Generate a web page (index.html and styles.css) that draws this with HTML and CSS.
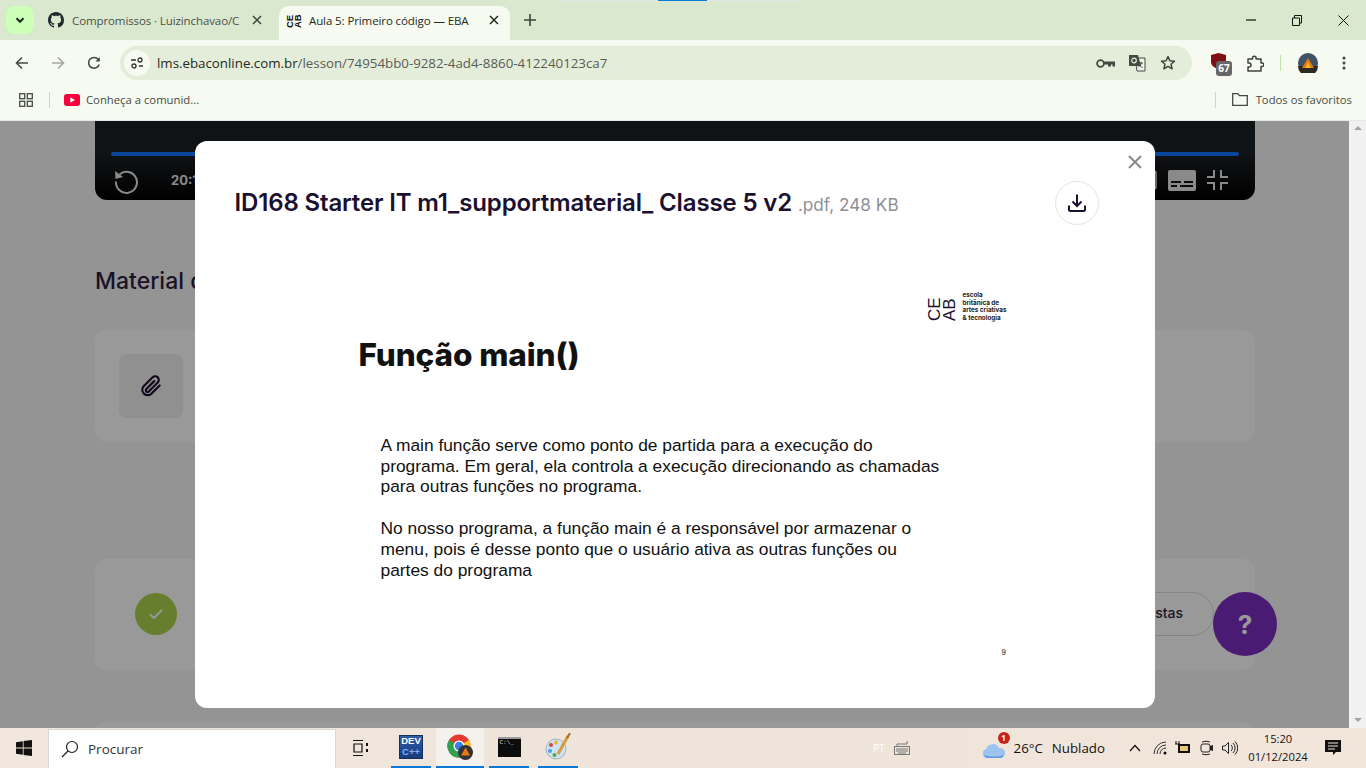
FILE: index.html

```html
<!DOCTYPE html>
<html lang="pt-BR">
<head>
  <meta charset="UTF-8" />
  <meta name="viewport" content="width=device-width, initial-scale=1.0"/>
  <title>Aula 5: Primeiro código — EBAC</title>
  <link rel="stylesheet" href="styles.css">
</head>
<body>

  <!-- browser chrome -->
  <header class="browser">
    <div class="share-strip"><span></span></div>
    <div class="tabstrip">
      <button class="tab-search">
        <svg width="12" height="12" viewBox="0 0 12 12"><path d="M2.5 4.2 6 7.8l3.5-3.6" fill="none" stroke="#1f2a1c" stroke-width="2"/></svg>
      </button>
      <div class="tab">
        <svg class="favicon" width="16" height="16" viewBox="0 0 16 16"><path fill="#24292f" d="M8 0C3.58 0 0 3.58 0 8c0 3.54 2.29 6.53 5.47 7.59.4.07.55-.17.55-.38 0-.19-.01-.82-.01-1.49-2.01.37-2.53-.49-2.69-.94-.09-.23-.48-.94-.82-1.13-.28-.15-.68-.52-.01-.53.63-.01 1.08.58 1.23.82.72 1.21 1.87.87 2.33.66.07-.52.28-.87.51-1.07-1.78-.2-3.64-.89-3.64-3.95 0-.87.31-1.59.82-2.15-.08-.2-.36-1.02.08-2.12 0 0 .67-.21 2.2.82.64-.18 1.32-.27 2-.27s1.36.09 2 .27c1.53-1.04 2.2-.82 2.2-.82.44 1.1.16 1.92.08 2.12.51.56.82 1.27.82 2.15 0 3.07-1.87 3.75-3.65 3.95.29.25.54.73.54 1.48 0 1.07-.01 1.93-.01 2.2 0 .21.15.46.55.38A8.01 8.01 0 0 0 16 8c0-4.42-3.58-8-8-8z"/></svg>
        <span class="tab-title">Compromissos · Luizinchavao/C</span>
        <svg class="tab-close" width="10" height="10" viewBox="0 0 10 10"><path d="M1 1l8 8M9 1l-8 8" stroke="#3c4438" stroke-width="1.5"/></svg>
      </div>
      <div class="tab tab-active">
        <div class="ebac-mark ebac-mark-small"><span>CE</span><span>AB</span></div>
        <span class="tab-title">Aula 5: Primeiro código — EBA</span>
        <svg class="tab-close" width="10" height="10" viewBox="0 0 10 10"><path d="M1 1l8 8M9 1l-8 8" stroke="#1f2a1c" stroke-width="1.5"/></svg>
      </div>
      <svg class="new-tab" width="12" height="12" viewBox="0 0 12 12"><path d="M6 0v12M0 6h12" stroke="#3c4438" stroke-width="1.6"/></svg>
      <div class="window-btns">
        <svg width="10" height="10" viewBox="0 0 10 10"><path d="M0 5h10" stroke="#111" stroke-width="1.2"/></svg>
        <svg width="10" height="11" viewBox="0 0 10 11"><path d="M.5 3h7v7.500h-7zM2.500 3V.5h7v7.500H7.500" fill="none" stroke="#111"/></svg>
        <svg width="11" height="11" viewBox="0 0 11 11"><path d="M.5.5l10 10M10.500.5l-10 10" stroke="#111"/></svg>
      </div>
    </div>

    <div class="toolbar">
      <svg class="nav-icon" width="14" height="14" viewBox="0 0 14 14"><path d="M13 7H2M7 1.500 1.500 7 7 12.500" fill="none" stroke="#454b43" stroke-width="1.6"/></svg>
      <svg class="nav-icon" width="14" height="14" viewBox="0 0 14 14"><path d="M1 7h11M7 1.500 12.500 7 7 12.500" fill="none" stroke="#a3a8a0" stroke-width="1.6"/></svg>
      <svg class="nav-icon" width="14" height="14" viewBox="0 0 14 14"><path d="M12.200 8.500A5.400 5.400 0 1 1 11.300 3.500" fill="none" stroke="#454b43" stroke-width="1.6"/><path d="M12.800 1v4.400H8.400z" fill="#454b43"/></svg>
      <div class="omnibox">
        <span class="site-info">
          <svg width="14" height="14" viewBox="0 0 14 14"><g fill="none" stroke="#2d332b" stroke-width="1.300"><path d="M1 4h5M9 10h4"/><circle cx="10" cy="4" r="2"/><circle cx="4" cy="10" r="2"/></g></svg>
        </span>
        <span class="url"><b>lms.ebaconline.com.br</b>/lesson/74954bb0-9282-4ad4-8860-412240123ca7</span>
        <div class="omni-icons">
          <svg width="19" height="11" viewBox="0 0 19 11"><circle cx="4.500" cy="5.500" r="3.400" fill="none" stroke="#454b43" stroke-width="1.800"/><path d="M8 3.500h11v5h-2.500v-2H15v2h-3v-2H8z" fill="#454b43"/></svg>
          <svg width="18" height="18" viewBox="0 0 18 18"><path d="M7 4h10v13H9z" fill="#eef3e8" stroke="#454b43"/><path d="M1 1h9l3 11H1z" fill="#454b43"/><circle cx="6" cy="6.500" r="2.300" fill="none" stroke="#e4edda" stroke-width="1.200"/><path d="M11 9h4M13 8v1c0 2-1 3-2.500 4M11.500 10.500c.5 1.500 1.500 2.500 3 3" fill="none" stroke="#454b43"/></svg>
          <svg width="16" height="16" viewBox="0 0 16 16"><path d="M8 1.500l1.900 4.300 4.600.4-3.500 3 1.100 4.600L8 11.400l-4.100 2.400L5 9.200l-3.500-3 4.600-.4z" fill="none" stroke="#3d433b" stroke-width="1.500" stroke-linejoin="round"/></svg>
        </div>
      </div>
      <div class="ext-icons">
        <div class="ublock">
          <svg width="15" height="16" viewBox="0 0 15 16"><path d="M7.500 0 15 2v7c0 3.500-3.500 6-7.500 7C3.500 15 0 12.500 0 9V2z" fill="#7f0f12"/></svg>
          <span class="ublock-count">67</span>
        </div>
        <svg class="puzzle" width="17" height="17" viewBox="0 0 17 17"><path d="M1 4h4.500V3a1.800 1.800 0 0 1 3.600 0v1H14v4h1a1.800 1.800 0 0 1 0 3.600h-1V16H1v-4h1a2 2 0 0 0 0-4H1z" fill="none" stroke="#3d433b" stroke-width="1.500" stroke-linejoin="round"/></svg>
        <i class="bar-sep"></i>
        <svg class="avatar" width="20" height="20" viewBox="0 0 20 20"><circle cx="10" cy="10" r="10" fill="#3f5266"/><path d="M0 13h20a10 10 0 0 1-20 0z" fill="#2d2a1f"/><path d="M10 5l6 10H4z" fill="#e8780f"/><path d="M10 9l2.500 6h-5z" fill="#fbbf2e"/></svg>
        <svg class="menu-dots" width="4" height="14" viewBox="0 0 4 14"><circle cx="2" cy="2" r="1.500" fill="#3d433b"/><circle cx="2" cy="7" r="1.500" fill="#3d433b"/><circle cx="2" cy="12" r="1.500" fill="#3d433b"/></svg>
      </div>
    </div>

    <div class="bookmarks">
      <svg width="14" height="14" viewBox="0 0 14 14"><g fill="none" stroke="#454b43" stroke-width="1.300"><rect x=".7" y=".7" width="5" height="5"/><rect x="8.300" y=".7" width="5" height="5"/><rect x=".7" y="8.300" width="5" height="5"/><rect x="8.300" y="8.300" width="5" height="5"/></g></svg>
      <i class="bar-sep"></i>
      <svg width="16" height="12" viewBox="0 0 16 12"><rect width="16" height="12" rx="3" fill="#f8003c"/><path d="M6.300 3.300 11 6 6.300 8.700z" fill="#fff"/></svg>
      <span class="bookmark-label">Conheça a comunid...</span>
      <i class="bar-sep bar-sep-right"></i>
      <svg width="16" height="13" viewBox="0 0 16 13"><path d="M.7.7h5l1.800 2h7.800v9.600H.7z" fill="none" stroke="#454b43" stroke-width="1.300"/></svg>
      <span class="bookmark-label">Todos os favoritos</span>
    </div>
  </header>

  <!-- lesson page behind the dialog -->
  <div class="viewport">
    <main class="lesson">
      <section class="player">
        <div class="progress"></div>
        <div class="controls">
          <svg width="28" height="28" viewBox="0 0 28 28"><path d="M7.500 8.500A10.500 10.500 0 1 1 4 15.500" fill="none" stroke="#e6e6e6" stroke-width="2"/><path d="M3 5l.5 8 7.500-2z" fill="#e6e6e6"/></svg>
          <span class="time">20:14</span>
          <svg class="ctl-frame" width="14" height="20" viewBox="0 0 14 20"><rect x="1" y="1" width="12" height="18" rx="2" fill="none" stroke="#e6e6e6" stroke-width="1.500"/></svg>
          <svg width="28" height="21" viewBox="0 0 28 21"><rect width="28" height="21" rx="2" fill="#e6e6e6"/><path d="M3 12h10M16 12h9M3 16h6M12 16h13" stroke="#111" stroke-width="2"/></svg>
          <svg width="21" height="20" viewBox="0 0 21 20"><path d="M7 0v7H0M14 0v7h7M0 13h7v7M21 13h-7v7" fill="none" stroke="#e6e6e6" stroke-width="2"/></svg>
        </div>
      </section>

      <h2 class="section-title">Material de apoio</h2>

      <section class="card card-material">
        <div class="clip-tile">
          <svg width="26" height="26" viewBox="0 0 24 24"><path d="M20 11.500 12 19.500a5 5 0 0 1-7-7l8.500-8.500a3.300 3.300 0 0 1 4.700 4.700L10 17a1.600 1.600 0 0 1-2.300-2.300L15 7.500" fill="none" stroke="#1c1030" stroke-width="2" stroke-linecap="round"/></svg>
        </div>
      </section>

      <section class="card card-quiz">
        <span class="check">
          <svg width="16" height="12" viewBox="0 0 16 12"><path d="M2 6.500 6 10l8-8" fill="none" stroke="#fff" stroke-width="2"/></svg>
        </span>
        <a class="answers-btn">Ver respostas</a>
      </section>

      <section class="card card-next"></section>
    </main>

    <div class="scrollbar">
      <span class="arrow-up"></span>
      <span class="arrow-down"></span>
    </div>

    <button class="help-btn">?</button>

    <div class="overlay">
      <div class="modal">
        <svg class="modal-close" width="14" height="14" viewBox="0 0 14 14"><path d="M1 1l12 12M13 1 1 13" stroke="#8a8a8a" stroke-width="2"/></svg>
        <div class="modal-head">
          <h3 class="file-name">ID168 Starter IT m1_supportmaterial_ Classe 5 v2 <small>.pdf, 248 KB</small></h3>
          <button class="download">
            <svg width="20" height="20" viewBox="0 0 20 20"><path d="M10 1.500v11M5.500 8.500l4.500 4.500 4.500-4.500M2 12.500v4a1.500 1.500 0 0 0 1.500 1.500h13a1.500 1.500 0 0 0 1.500-1.500v-4" fill="none" stroke="#1c1030" stroke-width="2"/></svg>
          </button>
        </div>

        <div class="slide">
          <div class="slide-logo">
            <div class="ebac-mark"><span>CE</span><span>AB</span></div>
            <p>escola<br>britânica de<br>artes criativas<br>&amp; tecnologia</p>
          </div>
          <h1 class="slide-title">Função main()</h1>
          <p class="slide-text">A main função serve como ponto de partida para a execução do<br>programa. Em geral, ela controla a execução direcionando as chamadas<br>para outras funções no programa.</p>
          <p class="slide-text">No nosso programa, a função main é a responsável por armazenar o<br>menu, pois é desse ponto que o usuário ativa as outras funções ou<br>partes do programa</p>
          <span class="slide-num">9</span>
        </div>
      </div>
    </div>
  </div>

  <!-- windows taskbar -->
  <footer class="taskbar">
    <svg class="win-logo" width="16" height="16" viewBox="0 0 16 16"><path fill="#111" d="M0 2.200 6.800 1.200v6.400H0zM7.600 1.100 16 0v7.600H7.600zM0 8.400h6.800v6.400L0 13.800zM7.600 8.400H16V16l-8.400-1.100z"/></svg>
    <div class="search-box">
      <svg width="18" height="18" viewBox="0 0 18 18"><circle cx="11" cy="7" r="5.500" fill="none" stroke="#222" stroke-width="1.200"/><path d="M7 11 1 17" stroke="#222" stroke-width="1.200"/></svg>
      <span>Procurar</span>
    </div>
    <svg class="task-view" width="16" height="16" viewBox="0 0 16 16"><path d="M1 .5h10M1 15.500h10M2 4h8v8H2z" fill="none" stroke="#111" stroke-width="1.200"/><path d="M14 3h2v3h-2zM14 9h2v3h-2z" fill="#111"/></svg>
    <div class="task-apps">
      <div class="app app-dev">
        <div class="dev-icon"><span>DEV</span><span>C++</span></div>
      </div>
      <div class="app app-chrome">
        <svg width="26" height="26" viewBox="0 0 26 26"><circle cx="12" cy="12" r="11.500" fill="#e33b2e"/><path d="M12 12 22 6a11.500 11.500 0 0 1-7 17z" fill="#f7c325"/><path d="M12 12l3 11A11.500 11.500 0 0 1 2 6z" fill="#2fa14f"/><circle cx="12" cy="12" r="5.500" fill="#fff"/><circle cx="12" cy="12" r="4.200" fill="#3b7de8"/><circle cx="18.500" cy="18.500" r="7.500" fill="#333"/><path d="M18.500 13.500l4.500 8h-9z" fill="#e8780f"/></svg>
      </div>
      <div class="app app-cmd">
        <div class="cmd-icon">C:\_</div>
      </div>
      <div class="app app-paint">
        <svg width="26" height="28" viewBox="0 0 26 28"><ellipse cx="11" cy="16" rx="10" ry="10" fill="#cfe3ee" stroke="#9fb5c4"/><circle cx="6" cy="12" r="2" fill="#d8433c"/><circle cx="11" cy="9.500" r="2" fill="#e9b634"/><circle cx="5" cy="18" r="2" fill="#4d9be0"/><circle cx="9.500" cy="22" r="2" fill="#5aa84a"/><path d="M13 21 23 3" stroke="#d99a3a" stroke-width="3"/><path d="M22 5 25 0" stroke="#a86a2c" stroke-width="2"/></svg>
      </div>
    </div>
    <div class="tray">
      <span class="lang">PT</span>
      <svg class="tray-keyboard" width="16" height="14" viewBox="0 0 16 14"><rect x=".5" y="5.500" width="15" height="8" fill="none" stroke="#777"/><path d="M2 8h12M2 10h12M4 12h8" stroke="#777"/><path d="M3 5V3h10V0" fill="none" stroke="#777"/></svg>
      <div class="weather">
        <svg width="24" height="22" viewBox="0 0 24 22"><path d="M5 21a4.500 4.500 0 0 1-1-8.800A7 7 0 0 1 17 11a5 5 0 0 1 2 10z" fill="#9cc4ee"/><path d="M2 18c6 2 14 2 20 0a5 5 0 0 1-3 3H5a4 4 0 0 1-3-3z" fill="#5f9be0"/></svg>
        <span class="weather-badge">1</span>
      </div>
      <span class="temp">26°C</span>
      <span class="temp-label">Nublado</span>
      <svg class="tray-caret" width="12" height="8" viewBox="0 0 12 8"><path d="M1 7l5-5.500L11 7" fill="none" stroke="#111" stroke-width="1.200"/></svg>
      <svg class="tray-wifi" width="14" height="14" viewBox="0 0 14 14"><g fill="none" stroke="#333"><path d="M1 13A12 12 0 0 1 13 1"/><path d="M4 13a9 9 0 0 1 9-9"/><path d="M7 13a6 6 0 0 1 6-6"/></g><circle cx="12" cy="12" r="1.500" fill="#111"/></svg>
      <svg class="tray-battery" width="16" height="14" viewBox="0 0 16 14"><rect x="3" y="3" width="12" height="9" fill="#111"/><rect x="5" y="5" width="8" height="5" fill="#e8c87a"/><path d="M1 0v3M4 0v3M0 3h5v2l-2 2" fill="none" stroke="#111"/></svg>
      <svg class="tray-cam" width="14" height="18" viewBox="0 0 14 18"><path d="M2 3a5 1.500 0 0 1 8 0M2 15a5 1.500 0 0 0 8 0" fill="none" stroke="#222"/><rect x="1" y="5" width="9" height="8" rx="2" fill="none" stroke="#222"/><path d="M10 7l3-1v6l-3-1z" fill="#222"/></svg>
      <svg class="tray-sound" width="16" height="14" viewBox="0 0 16 14"><path d="M.5 5h2.500l3.500-3.500v11L3 9H.5z" fill="none" stroke="#222"/><path d="M9 4a4 4 0 0 1 0 6M11 2a7 7 0 0 1 0 10M13 .5a9 9 0 0 1 0 13" fill="none" stroke="#222"/></svg>
      <div class="clock"><span>15:20</span><span>01/12/2024</span></div>
      <svg class="tray-notify" width="16" height="17" viewBox="0 0 16 17"><path d="M0 0h16v12h-5l-3 3v-3H0z" fill="#111"/><path d="M3 3h10M3 6h10M3 9h7" stroke="#f1e6db"/></svg>
    </div>
  </footer>

</body>
</html>
```

FILE: styles.css

```css
* {
  box-sizing: border-box;
}
html, body {
  margin: 0;
  height: 768px;
  overflow: hidden;
}
body {
  font-family: 'Open Sans', sans-serif;
  display: flex;
  flex-direction: column;
  background-color: #fff;
}
button {
  border: 0;
  padding: 0;
  font: inherit;
}
svg {
  display: block;
  flex: none;
}

/* browser chrome */
.browser {
  position: relative;
  height: 121px;
  flex: none;
  background-color: #f6faf0;
  border-bottom: 1px solid #e6e9e1;
}
.share-strip {
  position: absolute;
  top: 0;
  left: 560px;
  width: 245px;
  height: 1px;
  background-color: #e3e6e3;
}
.share-strip span {
  display: block;
  width: 49px;
  height: 1px;
  margin-left: 98px;
  background-color: #0a7ad6;
}
.tabstrip {
  height: 40px;
  background-color: #dae8d0;
  display: flex;
  align-items: flex-end;
  padding-left: 6px;
}
.tab-search {
  width: 28px;
  height: 28px;
  margin-bottom: 6px;
  border-radius: 8px;
  background-color: #ccffb8;
  display: flex;
  align-items: center;
  justify-content: center;
}
.tab {
  width: 234px;
  height: 34px;
  padding: 0 4px 6px 14px;
  display: flex;
  align-items: center;
  font-size: 11.5px;
  color: #4a5046;
}
.tab-active {
  width: 231px;
  margin-left: 11px;
  padding-left: 7px;
  padding-right: 8px;
  background-color: #f6faf0;
  border-radius: 10px 10px 0 0;
  color: #1f2a1c;
}
.tab .favicon {
  flex: none;
}
.tab-title {
  flex: 1;
  margin-left: 8px;
  white-space: nowrap;
  letter-spacing: -0.1px;
}
.tab-close {
  margin: 0 3px 0 13px;
}
.new-tab {
  margin: 0 0 14px 14px;
}
.window-btns {
  margin-left: auto;
  width: 120px;
  height: 40px;
  padding: 15px 17px 0 0;
  display: flex;
  justify-content: space-between;
  align-self: flex-start;
}

.toolbar {
  height: 40px;
  padding: 6px 0 0 15px;
  display: flex;
  align-items: center;
}
.nav-icon {
  margin-right: 22px;
}
.nav-icon:nth-child(3) {
  margin-right: 19px;
}
.omnibox {
  width: 1072px;
  height: 34px;
  border-radius: 17px;
  background-color: #e4edda;
  display: flex;
  align-items: center;
  padding-left: 4px;
}
.site-info {
  width: 26px;
  height: 26px;
  border-radius: 50%;
  background-color: #f6faf0;
  display: flex;
  align-items: center;
  justify-content: center;
}
.url {
  margin-left: 7px;
  font-size: 13.3px;
  color: #575d54;
  white-space: nowrap;
}
.url b {
  font-weight: 400;
  color: #1f2a1c;
}
.omni-icons {
  margin-left: auto;
  padding-right: 16px;
  display: flex;
  align-items: center;
  gap: 13px;
}
.omni-icons svg:nth-child(2) {
  margin-right: 1px;
}
.ext-icons {
  flex: 1;
  display: flex;
  align-items: center;
  padding-left: 19px;
}
.ublock {
  position: relative;
  width: 15px;
  height: 22px;
  margin-top: 2px;
}
.ublock-count {
  position: absolute;
  left: 5px;
  top: 8px;
  width: 16px;
  height: 15px;
  border-radius: 3px;
  background-color: #676767;
  color: #fff;
  font-size: 10px;
  font-weight: 700;
  line-height: 15px;
  text-align: center;
}
.puzzle {
  margin-left: 21px;
}
.bar-sep {
  display: block;
  width: 1px;
  height: 16px;
  background-color: #bfe6a8;
  flex: none;
}
.ext-icons .bar-sep {
  margin-left: 16px;
}
.avatar {
  margin-left: 17px;
}
.menu-dots {
  margin-left: 24px;
}

.bookmarks {
  height: 40px;
  padding: 0 14px 1px 19px;
  display: flex;
  align-items: center;
  font-size: 11.3px;
  color: #454b43;
}
.bookmarks > .bar-sep {
  margin: 0 14px 0 16px;
}
.bookmarks > .bar-sep-right {
  margin: 0 16px 0 auto;
}
.bookmark-label {
  margin-left: 6px;
  white-space: nowrap;
}
.bookmark-label:last-child {
  margin-left: 8px;
}

/* lesson page */
.viewport {
  position: relative;
  flex: 1;
  display: flex;
  overflow: hidden;
}
.lesson {
  width: 1349px;
  flex: none;
  padding: 0 94px 0 95px;
  background-color: #f7f7f9;
  font-family: 'Inter', sans-serif;
}
.player {
  height: 79px;
  padding: 31px 16px 0 17px;
  border-radius: 0 0 12px 12px;
  background-image: linear-gradient(#1c2025 40%, #000);
}
.progress {
  height: 4px;
  margin-left: -1px;
  border-radius: 2px;
  background-color: #1176ff;
}
.controls {
  margin-top: 10px;
  display: flex;
  align-items: center;
  color: #e6e6e6;
}
.time {
  margin-left: 31px;
  font-size: 13px;
  font-weight: 700;
}
.ctl-frame {
  margin-left: auto;
  margin-right: 11px;
}
.controls svg:last-child {
  margin: 0 11px;
}
.section-title {
  margin: 66px 0 34px;
  font-size: 23px;
  line-height: 30px;
  font-weight: 500;
  color: #2d1f3f;
}
.card {
  border-radius: 12px;
  background-color: #fff;
}
.card-material {
  height: 112px;
  padding: 24px;
}
.clip-tile {
  width: 64px;
  height: 64px;
  border-radius: 8px;
  background-color: #f0f0f2;
  display: flex;
  align-items: center;
  justify-content: center;
}
.card-quiz {
  height: 111px;
  margin-top: 117px;
  padding: 0 41px 1px 40px;
  display: flex;
  align-items: center;
  justify-content: space-between;
}
.check {
  width: 42px;
  height: 42px;
  border-radius: 50%;
  background-color: #aad24b;
  display: flex;
  align-items: center;
  justify-content: center;
}
.answers-btn {
  height: 44px;
  padding: 0 30px;
  border: 1px solid #dcdce0;
  border-radius: 22px;
  font-size: 14px;
  font-weight: 500;
  line-height: 40px;
  color: #2d1f3f;
}
.card-next {
  height: 100px;
  margin-top: 52px;
}
.scrollbar {
  flex: 1;
  position: relative;
  background-color: #f1f1f1;
}
.arrow-up, .arrow-down {
  position: absolute;
  left: 5px;
  width: 0;
  height: 0;
  border-left: 4px solid transparent;
  border-right: 4px solid transparent;
}
.arrow-up {
  top: 5px;
  border-bottom: 4px solid #a3a3a3;
}
.arrow-down {
  bottom: 6px;
  border-top: 4px solid #a3a3a3;
}
.help-btn {
  position: absolute;
  left: 1213px;
  top: 471px;
  width: 64px;
  height: 64px;
  border-radius: 50%;
  background-color: #7b2dbe;
  color: #fff;
  font-family: 'Inter', sans-serif;
  font-size: 26px;
  font-weight: 700;
}

/* file preview dialog */
.overlay {
  position: absolute;
  top: 0;
  left: 0;
  width: 1349px;
  bottom: 0;
  padding-top: 20px;
  display: flex;
  justify-content: center;
  align-items: flex-start;
  background-color: rgba(0, 0, 0, 0.4);
}
.modal {
  position: relative;
  width: 960px;
  height: 567px;
  border-radius: 12px;
  background-color: #fff;
  font-family: 'Inter', sans-serif;
}
.modal-close {
  position: absolute;
  top: 14px;
  right: 13px;
}
.modal-head {
  padding: 40px 56px 0 40px;
  display: flex;
  align-items: center;
  justify-content: space-between;
}
.file-name {
  margin: 0 0 2px;
  font-size: 24px;
  font-weight: 600;
  letter-spacing: -0.15px;
  color: #1c1030;
  white-space: nowrap;
}
.file-name small {
  font-size: 17.2px;
  font-weight: 400;
  letter-spacing: 0;
  color: #8f8f94;
}
.download {
  width: 44px;
  height: 44px;
  border: 1px solid #e4e4e8;
  border-radius: 50%;
  background-color: #fff;
  display: flex;
  align-items: center;
  justify-content: center;
}
.slide {
  position: relative;
  padding: 0 0 0 164px;
}
.slide-logo {
  position: absolute;
  top: 67px;
  left: 734px;
  display: flex;
  align-items: center;
  gap: 7px;
}
.slide-logo p {
  margin: 0;
  font-size: 6.3px;
  line-height: 7.600px;
  font-weight: 700;
  color: #222;
  white-space: nowrap;
}
.ebac-mark {
  display: flex;
  gap: 3px;
  font-size: 17px;
  line-height: 12px;
  color: #1c1030;
  font-family: 'Liberation Sans', sans-serif;
}
.ebac-mark span {
  writing-mode: vertical-rl;
  transform: rotate(180deg);
  letter-spacing: 0;
  height: 27px;
  width: 12px;
}
.ebac-mark-small {
  gap: 1px;
  flex: none;
  font-size: 9.500px;
  font-weight: 700;
  line-height: 7px;
  color: #111;
}
.ebac-mark-small span {
  height: 16px;
  width: 7px;
}
.slide-title {
  margin: 0;
  padding-top: 110px;
  font-family: 'Inter', sans-serif;
  font-size: 31.5px;
  line-height: 40px;
  font-weight: 800;
  color: #111;
  letter-spacing: -0.1px;
}
.slide-text {
  margin: 60px 0 0 22px;
  font-family: 'Liberation Sans', sans-serif;
  font-size: 17.360px;
  line-height: 20.700px;
  color: #111;
  white-space: nowrap;
}
.slide-text + .slide-text {
  margin-top: 21px;
}
.slide-num {
  position: absolute;
  top: 423px;
  left: 807px;
  font-size: 7px;
  font-weight: 700;
  color: #666;
}

/* taskbar */
.taskbar {
  height: 40px;
  flex: none;
  display: flex;
  align-items: center;
  background-image: linear-gradient(90deg, #f2e7dc, #efe4da 50%, #f2e6db);
  color: #111;
}
.win-logo {
  margin-left: 16px;
}
.search-box {
  width: 288px;
  height: 39px;
  margin: 1px 0 0 16px;
  padding-left: 12px;
  background-color: #fff;
  border: 1px solid #d8d8d8;
  border-bottom: 0;
  display: flex;
  align-items: center;
  gap: 9px;
  font-size: 13.5px;
  color: #333;
}
.task-view {
  margin-left: 16px;
}
.task-apps {
  margin-left: 23px;
  height: 40px;
  display: flex;
}
.app {
  height: 40px;
  width: 40px;
  margin-right: 5px;
  border-bottom: 2px solid #0a78d4;
  display: flex;
  align-items: center;
  justify-content: center;
}
.app-chrome {
  width: 48px;
  background-color: #f5f1ec;
}
.app-paint {
  margin-left: 4px;
}
.dev-icon {
  width: 24px;
  height: 24px;
  border: 1px solid #12315f;
  background-image: linear-gradient(#2f5fa8, #183b7c);
  color: #fff;
  display: flex;
  flex-direction: column;
  align-items: center;
  font-family: 'Liberation Sans', sans-serif;
  font-size: 9.500px;
  font-weight: 700;
  line-height: 10.500px;
}
.dev-icon span:last-child {
  color: #7fb2f5;
}
.cmd-icon {
  width: 23px;
  height: 20px;
  background-color: #0c0c0c;
  border-top: 2px solid #9a9a9a;
  color: #ddd;
  font-family: 'Liberation Mono', monospace;
  font-size: 6px;
  line-height: 7px;
  padding-left: 2px;
}
.tray {
  flex: 1;
  display: flex;
  align-items: center;
  font-size: 13.3px;
  position: relative;
  height: 40px;
}
.lang {
  margin-left: 290px;
  font-size: 10px;
  color: #fff;
}
.tray-keyboard {
  margin-left: 9px;
}
.weather {
  position: relative;
  margin-left: 72px;
}
.weather-badge {
  position: absolute;
  top: -5px;
  right: -4px;
  width: 12px;
  height: 12px;
  border-radius: 50%;
  background-color: #c9201c;
  color: #fff;
  font-size: 8px;
  font-weight: 700;
  line-height: 12px;
  text-align: center;
}
.temp {
  margin-left: 8px;
}
.temp-label {
  margin-left: 9px;
}
.tray-caret {
  margin-left: 24px;
}
.tray-wifi {
  margin-left: 12px;
}
.tray-battery {
  margin-left: 8px;
}
.tray-cam {
  margin-left: 9px;
}
.tray-sound {
  margin-left: 8px;
}
.clock {
  width: 66px;
  margin-left: 7px;
  display: flex;
  flex-direction: column;
  align-items: center;
  font-size: 11.200px;
  line-height: 18px;
}
.tray-notify {
  margin-left: 14px;
}
```
